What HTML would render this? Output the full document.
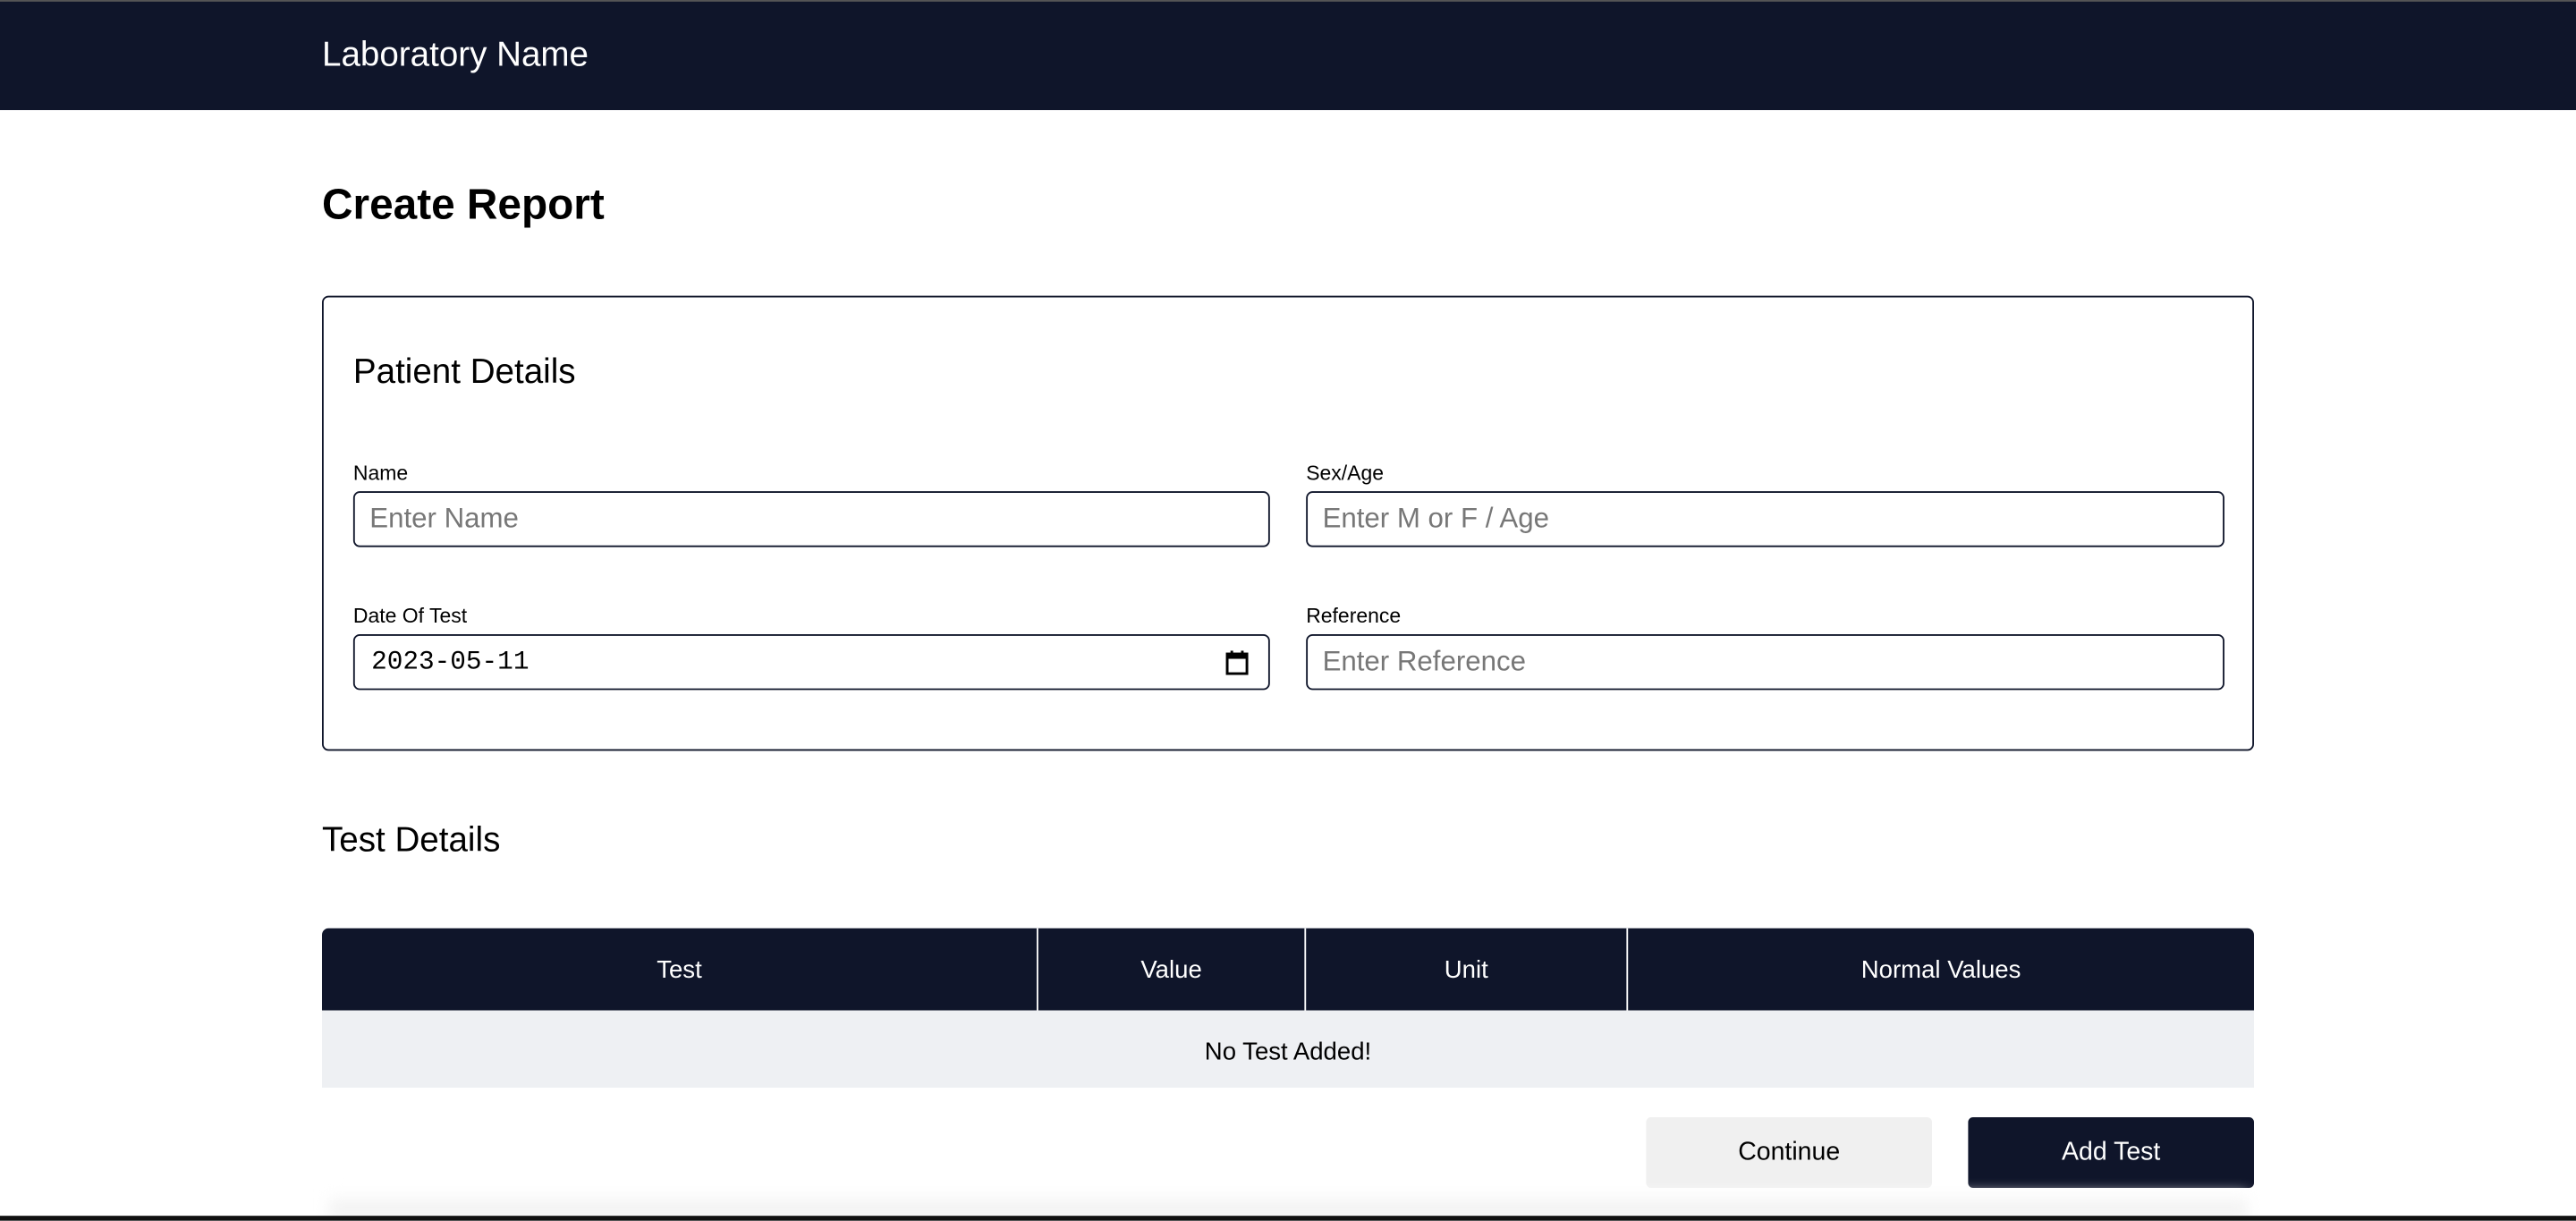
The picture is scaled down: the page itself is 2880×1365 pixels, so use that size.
<!DOCTYPE html>
<html><head><style>
html,body{margin:0;padding:0;width:2880px;height:1364px;overflow:hidden;background:#fff}
#w{position:absolute;left:0;top:0;width:1568px;height:743px;transform:scale(1.83673);transform-origin:0 0;font-family:"Liberation Sans",sans-serif;color:#000}
.a{position:absolute}
.hdr{left:0;top:0;width:1568px;height:66px;background:#0f152a;border-top:1px solid #555}
.inp{position:absolute;height:34px;border:1px solid #0f152a;border-radius:4px;box-sizing:border-box;font-size:17px;color:#777;padding-left:9px;line-height:32px}
.lbl{position:absolute;font-size:12.5px}
</style></head><body><div id="w">
<div class="a hdr"></div>
<div class="a" style="left:196px;top:22px;font-size:21px;color:#fff">Laboratory Name</div>
<div class="a" style="left:196px;top:109px;font-size:26px;font-weight:bold">Create Report</div>
<div class="a" style="left:196px;top:180px;width:1176px;height:277px;box-sizing:border-box;border:1px solid #0f152a;border-radius:4px"></div>
<div class="a" style="left:215px;top:215px;font-size:21px">Patient Details</div>
<div class="lbl" style="left:215px;top:281px">Name</div>
<div class="lbl" style="left:795px;top:281px">Sex/Age</div>
<div class="inp" style="left:215px;top:299px;width:558px">Enter Name</div>
<div class="inp" style="left:795px;top:299px;width:559px">Enter M or F / Age</div>
<div class="lbl" style="left:215px;top:368px">Date Of Test</div>
<div class="lbl" style="left:795px;top:368px">Reference</div>
<div class="inp" style="left:215px;top:386px;width:558px;color:#000;font-family:'Liberation Mono',monospace;font-size:16px;padding-left:10px">2023-05-11
<svg style="position:absolute;right:12px;top:9px" width="14" height="15" viewBox="0 0 14 15"><rect x="1" y="2" width="12" height="12" fill="none" stroke="#000" stroke-width="1.6"/><rect x="1" y="2" width="12" height="3" fill="#000"/><rect x="3" y="0" width="1.6" height="3" fill="#000"/><rect x="9.4" y="0" width="1.6" height="3" fill="#000"/></svg></div>
<div class="inp" style="left:795px;top:386px;width:559px">Enter Reference</div>
<div class="a" style="left:196px;top:500px;font-size:21px">Test Details</div>
<div class="a" style="left:196px;top:565px;width:1176px;height:50px;background:#0f152a;border-radius:4px 4px 0 0"></div>
<div class="a" style="left:631px;top:565px;width:1px;height:50px;background:#fff"></div>
<div class="a" style="left:794px;top:565px;width:1px;height:50px;background:#fff"></div>
<div class="a" style="left:990px;top:565px;width:1px;height:50px;background:#fff"></div>
<div class="a" style="left:196px;top:582px;width:435px;text-align:center;color:#fff;font-size:15px">Test</div>
<div class="a" style="left:632px;top:582px;width:162px;text-align:center;color:#fff;font-size:15px">Value</div>
<div class="a" style="left:795px;top:582px;width:195px;text-align:center;color:#fff;font-size:15px">Unit</div>
<div class="a" style="left:991px;top:582px;width:381px;text-align:center;color:#fff;font-size:15px">Normal Values</div>
<div class="a" style="left:196px;top:615px;width:1176px;height:47px;background:#eef0f3"></div>
<div class="a" style="left:196px;top:632px;width:1176px;text-align:center;font-size:15px">No Test Added!</div>
<div class="a" style="left:1002px;top:680px;width:174px;height:43px;background:#f0f0f0;border-radius:3px;text-align:center;line-height:44px;font-size:15.5px">Continue</div>
<div class="a" style="left:1198px;top:680px;width:174px;height:43px;background:#0f152a;border-radius:3px;text-align:center;line-height:44px;font-size:15.5px;color:#fff">Add Test</div>
<div class="a" style="left:200px;top:726px;width:1168px;height:14px;background:linear-gradient(#fff,#ececec);filter:blur(4px)"></div>
<div class="a" style="left:0;top:740px;width:1568px;height:3px;background:#111"></div>
</div></body></html>
